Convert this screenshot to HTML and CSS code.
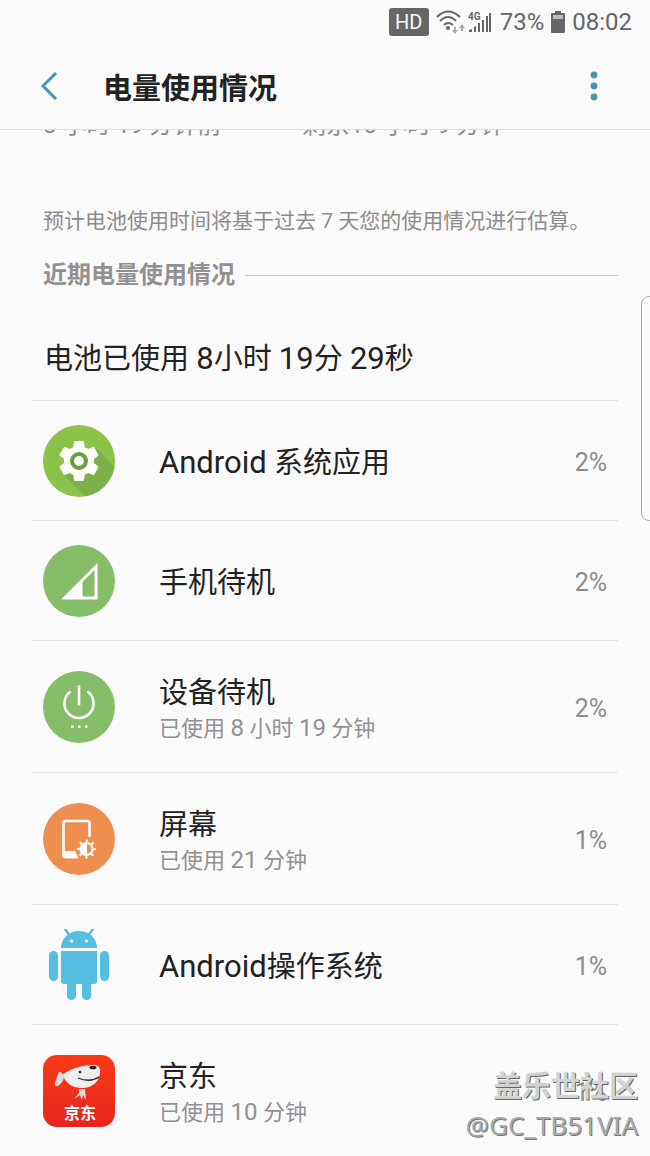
FILE: index.html
```html
<!DOCTYPE html>
<html lang="zh-CN">
    <head>
        <meta charset="utf-8">
        <meta name="viewport" content="width=device-width, initial-scale=1">
        <title>电量使用情况</title>
        <link rel="stylesheet" href="styles.css">
    </head>
    <body>
        <header class="top">
            <div class="status">
                <span class="hd">HD</span>
                <svg class="wifi" width="30" height="24" viewBox="0 0 30 24">
                    <g fill="none" stroke="#666" stroke-width="2">
                        <path d="M1 7 Q12 -4 24 7"/>
                        <path d="M4 11 Q12 3 20 11"/>
                        <path d="M8 15 Q12 11 17 15"/>
                    </g>
                    <circle cx="12" cy="18" r="2" fill="#666"/>
                    <path d="M18 17h2v3h2l-3 4-3-4h2zM25 21h2v-3h2l-3-4-3 4h2z" fill="#aaa"/>
                </svg>
                <svg class="signal" width="24" height="22" viewBox="0 0 24 22">
                    <path d="M1 21v-2l3-1v3zM6 21v-5l2-1v6zM10 21v-9h2v9zM14 21V9h2v12zM18 21V5h2v16zM21 21V2h2v19z" fill="#666"/>
                    <text class="net" x="0" y="9">4G</text>
                </svg>
                <span class="level">73%</span>
                <svg class="battery" width="16" height="22" viewBox="0 0 16 22">
                    <path d="M5 0h6v2h3q1 0 1 1v18q0 1-1 1H2q-1 0-1-1V3q0-1 1-1h3z" fill="#666"/>
                    <path d="M3 4h10v4H3z" fill="#bbb"/>
                </svg>
                <span class="clock">08:02</span>
            </div>
            <div class="bar">
                <button class="back" type="button" aria-label="返回">
                    <svg width="18" height="30" viewBox="0 0 18 30"><path d="M16 2 3 15l13 13" fill="none" stroke="#4496b2" stroke-width="3"/></svg>
                </button>
                <h1>电量使用情况</h1>
                <button class="more" type="button" aria-label="更多选项">
                    <svg width="8" height="30" viewBox="0 0 8 30" fill="#4496b2"><circle cx="4" cy="4" r="3.4"/><circle cx="4" cy="15" r="3.4"/><circle cx="4" cy="26" r="3.4"/></svg>
                </button>
            </div>
        </header>

        <main>
            <div class="summary">
                <span>8 小时 19 分钟前</span>
                <span>剩余10 小时 9 分钟</span>
            </div>
            <p class="note">预计电池使用时间将基于过去 7 天您的使用情况进行估算。</p>
            <h2>近期电量使用情况</h2>
            <p class="total">电池已使用 <b>8</b>小时 <b>19</b>分 <b>29</b>秒</p>

            <ul class="apps">
                <li class="app">
                    <svg class="icon" viewBox="0 0 72 72">
                        <clipPath id="disc"><circle cx="36" cy="36" r="36"/></clipPath>
                        <circle cx="36" cy="36" r="36" fill="#8bc34a"/>
                        <path clip-path="url(#disc)" d="M53 23 80 50v30H50L20 49z" fill="#7cb049"/>
                        <path transform="translate(12 12) scale(2)" fill="#fff" d="M19.43 12.98c.04-.32.07-.64.07-.98s-.03-.66-.07-.98l2.11-1.65c.19-.15.24-.42.12-.64l-2-3.46c-.12-.22-.39-.3-.61-.22l-2.49 1c-.52-.4-1.08-.73-1.69-.98l-.38-2.65C14.46 2.18 14.25 2 14 2h-4c-.25 0-.46.18-.49.42l-.38 2.65c-.61.25-1.17.59-1.69.98l-2.49-1c-.23-.09-.49 0-.61.22l-2 3.46c-.13.22-.07.49.12.64l2.11 1.65c-.04.32-.07.65-.07.98s.03.66.07.98l-2.11 1.65c-.19.15-.24.42-.12.64l2 3.46c.12.22.39.3.61.22l2.49-1c.52.4 1.08.73 1.69.98l.38 2.65c.03.24.24.42.49.42h4c.25 0 .46-.18.49-.42l.38-2.65c.61-.25 1.17-.59 1.69-.98l2.49 1c.23.09.49 0 .61-.22l2-3.46c.12-.22.07-.49-.12-.64z"/>
                        <circle cx="36" cy="36" r="7" fill="#fff" stroke="#689f38" stroke-width="4"/>
                    </svg>
                    <div class="info"><span class="name"><b>Android</b> 系统应用</span></div>
                    <span class="percent">2%</span>
                </li>
                <li class="app">
                    <svg class="icon" viewBox="0 0 72 72">
                        <circle cx="36" cy="36" r="36" fill="#86bd68"/>
                        <path d="M18 54.5 54.5 18v36.5zM39.5 37v14.500h12V25z" fill="#fff" fill-rule="evenodd"/>
                    </svg>
                    <div class="info"><span class="name">手机待机</span></div>
                    <span class="percent">2%</span>
                </li>
                <li class="app tall">
                    <svg class="icon" viewBox="0 0 72 72">
                        <circle cx="36" cy="36" r="36" fill="#86bd68"/>
                        <path d="M27.5 20.5a14.6 14.6 0 1 0 17 0M36 14.5v20" fill="none" stroke="#fff" stroke-width="2.6"/>
                        <path d="M28 54.5h2.5V57H28zM35 54.5h2.5V57H35zM42 54.5h2.5V57H42z" fill="#fff"/>
                    </svg>
                    <div class="info">
                        <span class="name">设备待机</span>
                        <span class="used">已使用 <b>8</b> 小时 <b>19</b> 分钟</span>
                    </div>
                    <span class="percent">2%</span>
                </li>
                <li class="app tall">
                    <svg class="icon" viewBox="0 0 72 72">
                        <circle cx="36" cy="36" r="36" fill="#ee8f50"/>
                        <path d="M46.5 34V20q0-2-2-2h-22q-2 0-2 2v32q0 2 2 2H33" fill="none" stroke="#fff" stroke-width="2.6"/>
                        <path d="M20 48h12l3.500 7.300H22z" fill="#fff"/>
                        <circle cx="43.5" cy="46" r="6" fill="none" stroke="#fff" stroke-width="2"/>
                        <path d="M44 40v12a6 6 0 0 1 0-12z" fill="#fff"/>
                        <circle cx="43.5" cy="46" r="8" fill="none" stroke="#fff" stroke-width="3" stroke-dasharray="2 4.283" stroke-dashoffset="1"/>
                    </svg>
                    <div class="info">
                        <span class="name">屏幕</span>
                        <span class="used">已使用 <b>21</b> 分钟</span>
                    </div>
                    <span class="percent">1%</span>
                </li>
                <li class="app">
                    <svg class="icon" viewBox="0 0 72 72">
                        <g fill="#57bee3">
                            <path d="M18 19a18 17 0 0 1 36 0z"/>
                            <path d="M22 0l5 7M50 0l-5 7" stroke="#57bee3" stroke-width="2.500" stroke-linecap="round"/>
                            <path d="M18 22h36v30q0 3-3 3H21q-3 0-3-3z"/>
                            <rect x="6" y="22" width="9" height="30" rx="4.5"/>
                            <rect x="57" y="22" width="9" height="30" rx="4.5"/>
                            <rect x="24" y="45" width="9" height="26" rx="4.5"/>
                            <rect x="39" y="45" width="9" height="26" rx="4.5"/>
                        </g>
                        <circle cx="28.5" cy="12" r="1.6" fill="#fff"/>
                        <circle cx="43.5" cy="12" r="1.6" fill="#fff"/>
                    </svg>
                    <div class="info"><span class="name"><b>Android</b>操作系统</span></div>
                    <span class="percent">1%</span>
                </li>
                <li class="app tall">
                    <svg class="icon" viewBox="0 0 72 72">
                        <linearGradient id="red" x2="0" y2="1"><stop stop-color="#fa3a18"/><stop offset="1" stop-color="#e6261c"/></linearGradient>
                        <rect width="72" height="72" rx="14" fill="url(#red)"/>
                        <path d="M18 21C26 14 38 10 51 10q7 0 6 8c-1 9-8 15-18 15-9 0-15-4-18-10z" fill="#eee"/>
                        <path d="M20 20q-3-6-5-1l-3 9q-1 4 3 3 5-3 6-9z" fill="#ddd"/>
                        <path d="M35 23q12 5 21-1" fill="none" stroke="#222" stroke-width="1.300"/>
                        <ellipse cx="50" cy="12.500" rx="3.500" ry="1.800" fill="#222"/>
                        <circle cx="37" cy="17" r="1.300" fill="#222"/>
                        <path d="M36 34h6l1 11-3-5-1 5-2-5-6 4 5-6z" fill="#ddd"/>
                        <text class="brand" x="37" y="64">京东</text>
                    </svg>
                    <div class="info">
                        <span class="name">京东</span>
                        <span class="used">已使用 <b>10</b> 分钟</span>
                    </div>
                    <span class="percent">1%</span>
                </li>
            </ul>
        </main>

        <div class="edge"></div>
        <div class="watermark">
            <div class="site">盖乐世社区</div>
            <div class="user">@GC_TB51VIA</div>
        </div>
    </body>
</html>
```
FILE: styles.css
```css
* {
    box-sizing: border-box;
}
body {
    margin: 0;
    min-height: 100vh;
    position: relative;
    overflow: hidden;
    background-color: #fafafa;
    color: #222;
    font-family: Roboto, "Noto Sans CJK SC", sans-serif;
}
h1, h2, p, ul {
    margin: 0;
    padding: 0;
}
button {
    display: flex;
    padding: 0;
    border: 0;
    background: none;
}
.top {
    position: relative;
    z-index: 1;
    background-color: #fafafa;
    border-bottom: 1px solid #dcdcdc;
}
.status {
    display: flex;
    align-items: center;
    justify-content: flex-end;
    height: 43px;
    padding-right: 18px;
    color: #666;
    font-size: 24px;
}
.hd {
    width: 40px;
    border-radius: 3px;
    background-color: #666;
    color: #fafafa;
    font-size: 20px;
    line-height: 28px;
    text-align: center;
}
.wifi {
    margin-left: 7px;
}
.signal {
    margin: 0 8px 0 2px;
}
.net {
    fill: #666;
    font-size: 10px;
    font-weight: bold;
}
.battery {
    margin: 0 6px;
}
.bar {
    display: flex;
    align-items: center;
    height: 86px;
    padding: 0 52px 0 40px;
}
.bar h1 {
    flex: 1;
    margin-left: 45px;
    font-size: 29px;
    font-weight: 600;
}
.summary {
    display: grid;
    grid-template-columns: 259px 1fr;
    margin: -21px 32px 0 43px;
    color: #8c8c8c;
    font-size: 24px;
    line-height: 32px;
}
.note {
    margin: 64px 32px 0 43px;
    color: #8c8c8c;
    font-size: 21px;
    line-height: 32px;
}
h2 {
    display: flex;
    align-items: center;
    gap: 10px;
    margin: 22px 32px 0 43px;
    color: #919191;
    font-size: 24px;
    line-height: 32px;
}
h2::after {
    content: "";
    flex: 1;
    height: 1px;
    background-color: #c8c8c8;
}
.total {
    margin: 46px 44px 19px;
    font-size: 29px;
    line-height: 44px;
}
/* latin and digits run a bit larger than the chinese */
.total b, .name b {
    font-size: 31px;
    font-weight: normal;
    line-height: 1;
}
.used b {
    font-size: 24px;
    font-weight: normal;
    line-height: 1;
}
.apps {
    margin: 0 32px;
    list-style: none;
    border-bottom: 1px solid #e4e4e4;
}
.app {
    display: flex;
    align-items: center;
    height: 120px;
    padding: 0 11px;
    border-top: 1px solid #e4e4e4;
}
.tall {
    height: 132px;
}
.icon {
    width: 72px;
    height: 72px;
}
.info {
    display: flex;
    flex: 1;
    flex-direction: column;
    margin-left: 44px;
    padding-top: 4px;
}
.name {
    font-size: 29px;
    line-height: 40px;
}
.used {
    color: #919191;
    font-size: 22px;
    line-height: 32px;
}
.percent {
    padding-top: 4px;
    color: #8c8c8c;
    font-size: 25px;
}
.brand {
    fill: #fff;
    font-size: 16px;
    font-weight: bold;
    text-anchor: middle;
}
/* edge panel handle */
.edge {
    position: absolute;
    top: 296px;
    right: -10px;
    width: 19px;
    height: 225px;
    border: 1px solid #aaa;
    border-radius: 8px;
}
.watermark {
    position: absolute;
    right: 12px;
    bottom: 14px;
    text-align: right;
}
.site {
    color: #d2d2d2;
    font-size: 29px;
    font-weight: bold;
    line-height: 40px;
    text-shadow: 1px 1px #666;
}
.user {
    color: #aaa;
    font-family: "Noto Sans", sans-serif;
    font-size: 26px;
    line-height: 36px;
    text-shadow: 1px 1px #777;
}
```
